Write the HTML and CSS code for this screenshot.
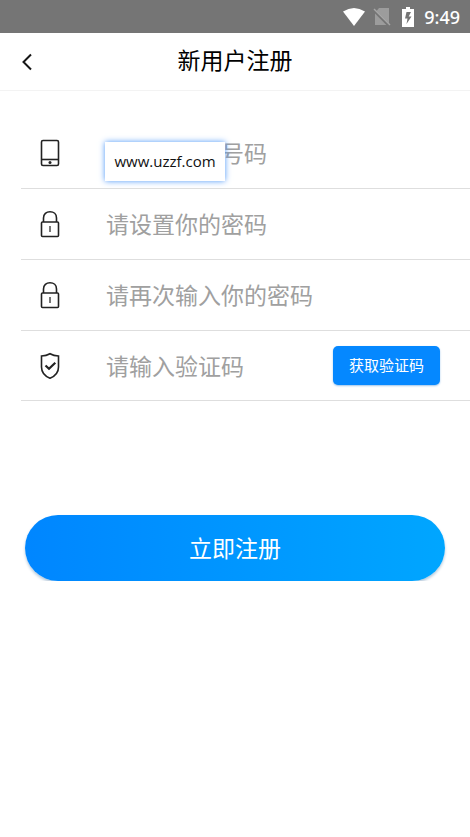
FILE: index.html
```html
<!DOCTYPE html>
<html lang="zh-CN">
<head>
<meta charset="utf-8">
<meta name="viewport" content="width=device-width, initial-scale=1">
<title>新用户注册</title>
<link rel="stylesheet" href="styles.css">
</head>
<body>
<div class="status-bar">
  <svg class="status-wifi" viewBox="0 0 24 20" aria-hidden="true"><path d="M1 4.500Q12-2.500 23 4.500L12 19Z" fill="#fff"/></svg>
  <svg class="status-sim" viewBox="0 0 18 18" aria-hidden="true"><path d="M6 0h10v17H2V5Z" fill="#9c9c9c"/><path d="M0 1.500 16 17.500" stroke="#757575" stroke-width="3"/><path d="M1 1 17 17" stroke="#a6a6a6" stroke-width="1.500"/></svg>
  <svg class="status-battery" viewBox="0 0 12 20" aria-hidden="true"><path d="M4 0h4v2h4v18H0V2h4Z" fill="#fff"/><path d="M4.500 5 3 11.500h2.500L4.500 17 9.500 9.500H6.700L9 5Z" fill="#757575"/></svg>
  <span class="status-time">9:49</span>
</div>
<header class="title-bar">
  <button class="back" type="button" aria-label="返回">
    <svg viewBox="0 0 12 18" aria-hidden="true"><path d="M10 1.500 2.500 9 10 16.500" fill="none" stroke="#161616" stroke-width="2"/></svg>
  </button>
  <h1 class="title">新用户注册</h1>
</header>
<main>
  <form class="form">
    <div class="field">
      <label class="field-icon" for="phone" aria-label="手机号码">
        <svg viewBox="0 0 20 28" aria-hidden="true"><g fill="none" stroke="#222" stroke-width="1.600"><rect x="1.500" y="1.500" width="17" height="25" rx="1.500"/><path d="M1.500 20.500h17"/></g><circle cx="10" cy="23.500" r="1.500" fill="#222"/></svg>
      </label>
      <input class="field-input" id="phone" type="tel" placeholder="请输入手机号码">
      <div class="tip">www.uzzf.com</div>
    </div>
    <div class="field">
      <label class="field-icon" for="password" aria-label="密码">
        <svg viewBox="0 0 20 28" aria-hidden="true"><g fill="none" stroke="#222" stroke-width="1.600"><rect x="1.500" y="12" width="17" height="14.500" rx="1"/><path d="M3.500 12V8C3.500 4 6.300 1.800 10 1.800S16.500 4 16.500 8v4"/><path d="M10 16v6" stroke="#555"/></g></svg>
      </label>
      <input class="field-input" id="password" type="password" placeholder="请设置你的密码">
    </div>
    <div class="field">
      <label class="field-icon" for="confirm" aria-label="确认密码">
        <svg viewBox="0 0 20 28" aria-hidden="true"><g fill="none" stroke="#222" stroke-width="1.600"><rect x="1.500" y="12" width="17" height="14.500" rx="1"/><path d="M3.500 12V8C3.500 4 6.300 1.800 10 1.800S16.500 4 16.500 8v4"/><path d="M10 16v6" stroke="#555"/></g></svg>
      </label>
      <input class="field-input" id="confirm" type="password" placeholder="请再次输入你的密码">
    </div>
    <div class="field">
      <label class="field-icon" for="code" aria-label="验证码">
        <svg viewBox="0 0 20 28" aria-hidden="true"><g fill="none" stroke="#222"><path d="M10 1.800C7.500 3.300 4.500 4 1.500 4v11c0 6 3.500 9.200 8.500 11.200 5-2 8.500-5.200 8.500-11.200V4c-3 0-6-.7-8.500-2.200Z" stroke-width="1.600"/><path d="M5.500 13.500 9 16.800 15.300 10.800" stroke-width="2.200"/></g></svg>
      </label>
      <input class="field-input" id="code" type="text" placeholder="请输入验证码">
      <button class="code-button" type="button">获取验证码</button>
    </div>
    <button class="submit" type="submit">立即注册</button>
  </form>
</main>
</body>
</html>
```

FILE: styles.css
```css
* {
  box-sizing: border-box;
}

body {
  margin: 0;
  background: #fff;
  color: #111;
  font-family: "Noto Sans CJK SC", sans-serif;
}

button,
input {
  font-family: inherit;
}

svg {
  display: block;
}

.status-bar {
  display: flex;
  align-items: center;
  justify-content: flex-end;
  height: 33px;
  padding-right: 10px;
  background: #757575;
}

.status-wifi {
  width: 24px;
  height: 20px;
}

.status-sim {
  width: 18px;
  height: 18px;
  margin-left: 7px;
}

.status-battery {
  width: 12px;
  height: 20px;
  margin-left: 11px;
}

.status-time {
  margin-left: 10px;
  color: #fff;
  font: 500 18px/24px "Noto Sans", sans-serif;
}

.title-bar {
  display: grid;
  grid-template-columns: 54px 1fr 54px;
  align-items: start;
  height: 58px;
  border-bottom: 1px solid #f3f3f3;
}

.back {
  display: flex;
  align-items: center;
  justify-content: center;
  height: 57px;
  padding: 0;
  border: 0;
  background: none;
}

.back svg {
  width: 12px;
  height: 18px;
}

.title {
  margin: 0;
  color: #000;
  font-size: 23px;
  font-weight: 400;
  line-height: 52px;
  text-align: center;
}

.form {
  display: flex;
  flex-direction: column;
  padding-top: 27px;
}

.field {
  position: relative;
  display: flex;
  align-items: center;
  height: 71px;
  margin-left: 21px;
  padding-right: 30px;
  border-bottom: 1px solid #dedede;
}

.field:last-of-type {
  height: 70px;
}

.field-icon {
  flex: none;
  width: 85px;
  padding-left: 19px;
}

.field-icon svg {
  width: 20px;
  height: 28px;
}

.field-input {
  flex: 1;
  min-width: 0;
  height: 48px;
  padding: 0 0 2px;
  border: 0;
  outline: 0;
  background: none;
  color: #111;
  font-size: 23px;
}

.field-input::placeholder {
  color: #a0a0a0;
  opacity: 1;
}

.tip {
  position: absolute;
  top: 24px;
  left: 84px;
  width: 120px;
  background: #fff;
  box-shadow: 0 0 6px #4f98f8;
  font: 15px/39px "Open Sans", sans-serif;
  text-align: center;
}

.code-button {
  flex: none;
  width: 107px;
  height: 39px;
  padding: 0 0 2px;
  border: 0;
  border-radius: 5px;
  background: #0588ff;
  box-shadow: 0 1px 2px #9cc4ea;
  color: #fff;
  font-size: 15px;
}

.submit {
  height: 66px;
  margin: 114px 25px 0;
  padding: 0 0 2px;
  border: 0;
  border-radius: 33px;
  background: linear-gradient(90deg, #0086ff, #00a6ff);
  box-shadow: 0 2px 3px #b4c8da;
  color: #fff;
  font-size: 23px;
}
```
